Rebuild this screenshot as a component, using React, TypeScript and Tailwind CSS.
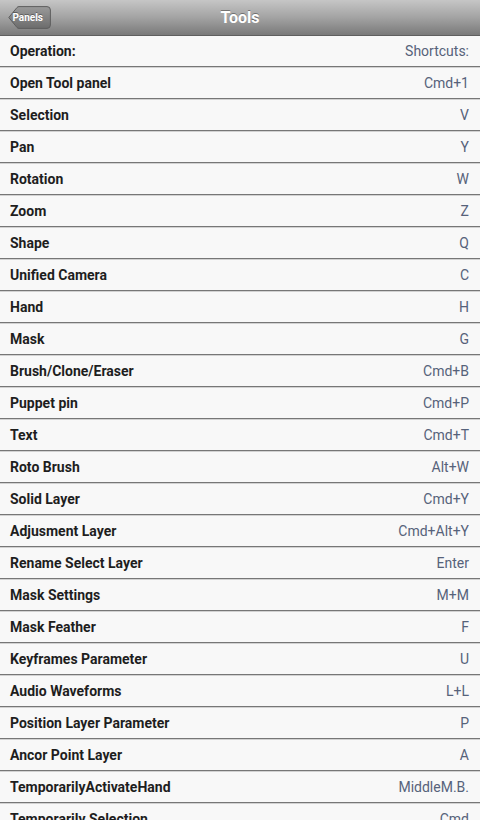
const rows: [string, string][] = [
  ["Operation:", "Shortcuts:"],
  ["Open Tool panel", "Cmd+1"],
  ["Selection", "V"],
  ["Pan", "Y"],
  ["Rotation", "W"],
  ["Zoom", "Z"],
  ["Shape", "Q"],
  ["Unified Camera", "C"],
  ["Hand", "H"],
  ["Mask", "G"],
  ["Brush/Clone/Eraser", "Cmd+B"],
  ["Puppet pin", "Cmd+P"],
  ["Text", "Cmd+T"],
  ["Roto Brush", "Alt+W"],
  ["Solid Layer", "Cmd+Y"],
  ["Adjusment Layer", "Cmd+Alt+Y"],
  ["Rename Select Layer", "Enter"],
  ["Mask Settings", "M+M"],
  ["Mask Feather", "F"],
  ["Keyframes Parameter", "U"],
  ["Audio Waveforms", "L+L"],
  ["Position Layer Parameter", "P"],
  ["Ancor Point Layer", "A"],
  ["TemporarilyActivateHand", "MiddleM.B."],
  ["Temporarily Selection", "Cmd"],
];

function BackButton() {
  return (
    <div className="relative h-[23px] w-[43px]">
      <svg width="43" height="23" viewBox="0 0 43 23" className="absolute inset-0">
        <defs>
          <linearGradient id="bb" x1="0" y1="0" x2="0" y2="1">
            <stop offset="0" stopColor="#9a9a9a" />
            <stop offset="1" stopColor="#6c6c6c" />
          </linearGradient>
        </defs>
        <path
          d="M0.8 11.5 L9 1.5 Q9.8 0.6 11 0.6 L39 0.6 Q42.4 0.6 42.4 4 L42.4 19 Q42.4 22.4 39 22.4 L11 22.4 Q9.8 22.4 9 21.5 Z"
          fill="url(#bb)"
          stroke="#5e5e5e"
          strokeWidth="1"
        />
      </svg>
      <span className="absolute inset-0 flex items-center justify-end pr-[8px] text-[10px] font-bold text-white [text-shadow:0_-1px_0_rgba(0,0,0,0.35)]">
        Panels
      </span>
    </div>
  );
}

export default function App() {
  return (
    <div className="h-[820px] w-[480px] overflow-hidden bg-[#f8f8f8] font-['Roboto','Liberation_Sans',sans-serif]">
      <header className="relative flex h-[36px] items-center border-b border-[#5f5f5f] bg-gradient-to-b from-[#c6c6c6] via-[#a3a3a3] to-[#7a7a7a] pl-[8px]">
        <BackButton />
        <h1 className="absolute inset-x-0 top-0 flex h-[35px] items-center justify-center text-[16px] font-bold text-white [text-shadow:0_-1px_0_rgba(0,0,0,0.35)]">
          Tools
        </h1>
      </header>
      <ul>
        {rows.map(([op, key]) => (
          <li key={op} className="flex h-[32px] flex-col">
            <div className="flex flex-1 items-center justify-between pl-[10px] pr-[11px]">
              <span className="text-[14px] font-bold text-[#1e1e1e]">{op}</span>
              <span className="text-[14px] text-[#56627a]">{key}</span>
            </div>
            <div className="h-px bg-[#777777]" />
            <div className="h-px bg-[#d2d2d2]" />
          </li>
        ))}
      </ul>
    </div>
  );
}
